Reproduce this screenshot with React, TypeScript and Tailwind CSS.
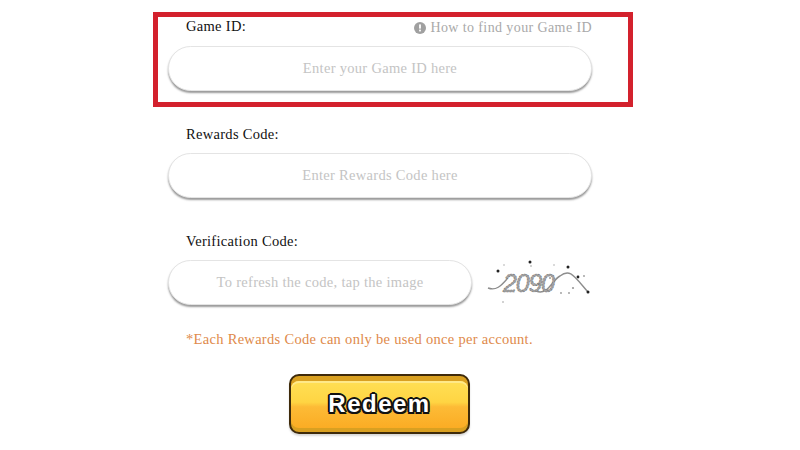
const serif = "font-['Liberation_Serif',serif]"
const labelText = "text-[14.5px] tracking-[0.3px] text-[#111]"

function PillInput({ placeholder, width }: { placeholder: string; width: string }) {
  return (
    <div
      className={`flex h-[45px] items-center justify-center rounded-full border border-[#e4e4e4] bg-white text-[14.5px] tracking-[0.3px] text-[#c4c4c4] shadow-[0_2px_2px_#9a9a9a] ${width}`}
    >
      {placeholder}
    </div>
  )
}

function Captcha() {
  const dots = [
    [530, 262, 1.5], [568, 267, 1.5], [498, 271, 1.5], [578, 277, 1.4], [584, 276, 0.9],
    [588, 292, 1.5], [569, 293, 0.9], [561, 293, 0.9], [573, 288, 1.1], [550, 278, 1],
    [504, 265, 0.7], [531, 266, 0.8], [554, 265, 0.7], [503, 302, 0.8], [514, 290, 0.7],
  ]
  return (
    <svg width="115" height="50" viewBox="480 255 115 50" className="ml-[8px] mt-[-6px] shrink-0">
      <path
        d="M488 288 C496 291 501 286 507 279 M536 291 C548 296 552 280 560 276 C570 268 574 276 588 292"
        fill="none"
        stroke="#8d8d8d"
        strokeWidth="1.4"
      />
      <text
        x="503"
        y="292"
        fontFamily="'Liberation Sans', sans-serif"
        fontStyle="italic"
        fontSize="25"
        fill="#a5a5a5"
        stroke="#6f6f6f"
        strokeWidth="0.6"
        strokeDasharray="2 1"
        textLength="52"
      >
        2090
      </text>
      {dots.map(([cx, cy, r], i) => (
        <circle key={i} cx={cx} cy={cy} r={r} fill={r > 1.2 ? "#222" : "#999"} />
      ))}
    </svg>
  )
}

export default function App() {
  return (
    <div className={`flex h-[450px] w-[800px] flex-col overflow-hidden bg-white pl-[153px] pt-[12px] ${serif}`}>
      {/* Game ID, outlined */}
      <section className="h-[95px] w-[480px] border-[5px] border-[#d3212d] pl-[10px] pr-[35px]">
        <div className="flex h-[20px] items-center justify-between pl-[18px]">
          <span className={labelText}>Game ID:</span>
          <span className="mr-[1px] flex items-center gap-[4px] text-[14px] tracking-[0.4px] text-[#a9a9a9]">
            <svg width="12" height="12" viewBox="0 0 12 12" className="mt-[2px]">
              <circle cx="6" cy="6" r="6" fill="#a0a0a0" />
              <rect x="5.1" y="2.4" width="1.8" height="4.2" fill="#fff" />
              <rect x="5.1" y="7.6" width="1.8" height="1.8" fill="#fff" />
            </svg>
            How to find your Game ID
          </span>
        </div>
        <div className="mt-[9px]">
          <PillInput placeholder="Enter your Game ID here" width="w-[424px]" />
        </div>
      </section>

      <section className="ml-[15px] mt-[16px]">
        <div className={`mt-[-1px] pl-[18px] leading-[24px] ${labelText}`}>Rewards Code:</div>
        <div className="mt-[7px]">
          <PillInput placeholder="Enter Rewards Code here" width="w-[424px]" />
        </div>
      </section>

      <section className="ml-[15px] mt-[31px]">
        <div className={`pl-[18px] leading-[24px] ${labelText}`}>Verification Code:</div>
        <div className="mt-[7px] flex items-center">
          <PillInput placeholder="To refresh the code, tap the image" width="w-[304px]" />
          <Captcha />
        </div>
      </section>

      <p className="ml-[33px] mt-[22px] text-[14.5px] leading-[24px] tracking-[0.3px] text-[#e08a4a]">
        *Each Rewards Code can only be used once per account.
      </p>

      <button className="ml-[136px] mt-[23px] h-[60px] w-[181px] rounded-[10px] border-2 border-[#3e2a0a] bg-[#d9a021] shadow-[0_2px_2px_#d9d9d9]">
        <div className="flex h-[47px] items-center justify-center rounded-[8px] bg-[linear-gradient(#ffdf55_0%,#ffd543_45%,#fdbb36_55%,#fbac24_100%)] shadow-[inset_0_2px_0_#ffe989]">
          <span className="font-['Liberation_Sans',sans-serif] text-[24px] font-bold tracking-[1.5px] text-white [text-shadow:-2px_0_0_#111,2px_0_0_#111,0_-2px_0_#111,0_2px_0_#111,-1.5px_-1.5px_0_#111,1.5px_-1.5px_0_#111,-1.5px_1.5px_0_#111,1.5px_1.5px_0_#111]">
            Redeem
          </span>
        </div>
      </button>
    </div>
  )
}
